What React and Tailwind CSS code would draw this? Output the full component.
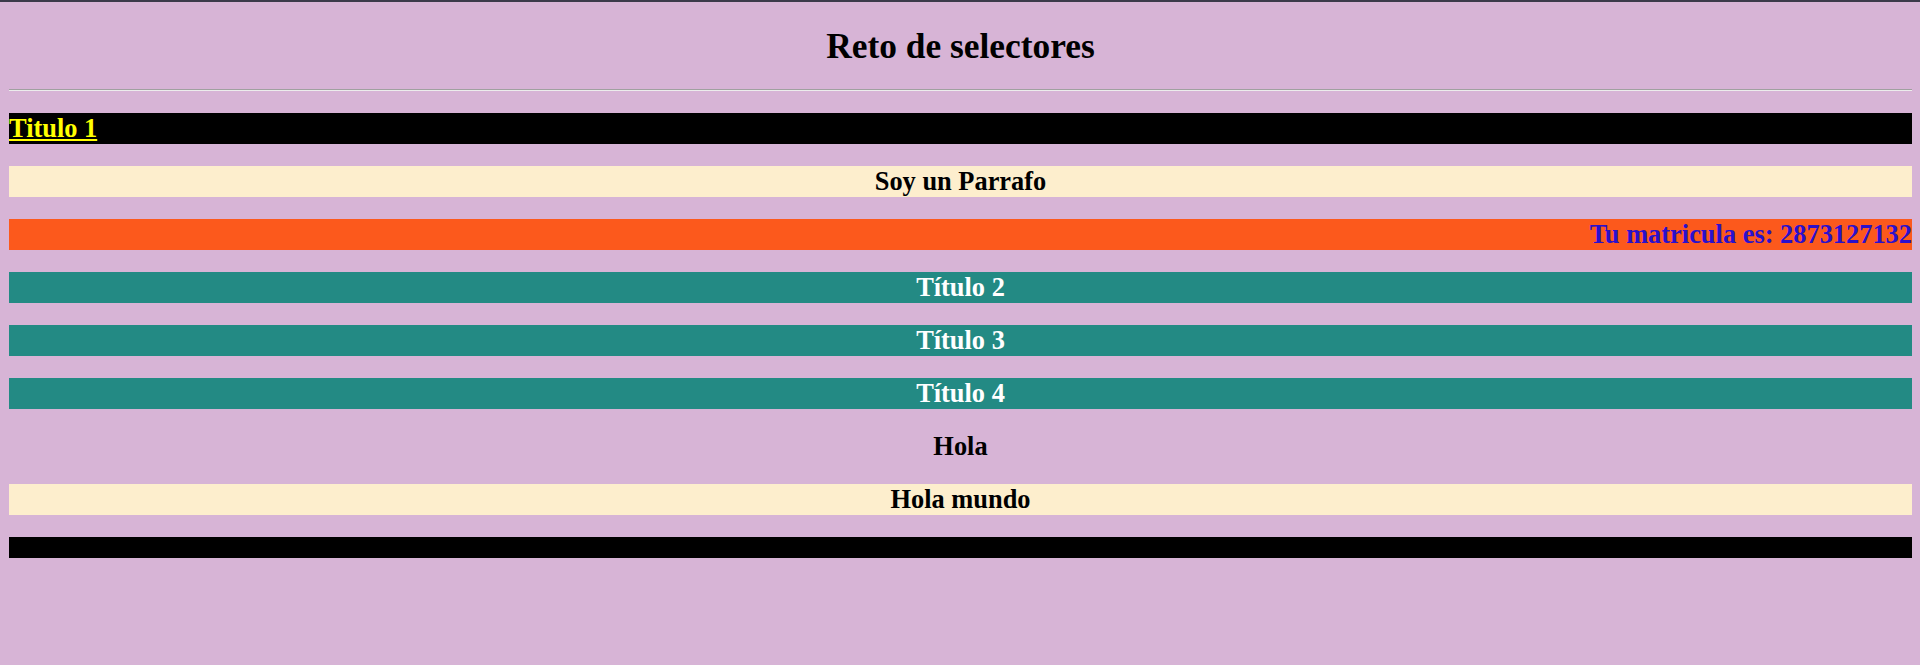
const serif = { fontFamily: '"Liberation Serif", "Times New Roman", serif' };

function Bar({ className = '', children }) {
  return (
    <div className={`h-[31px] text-[26.4px] leading-[31px] font-bold ${className}`}>
      {children}
    </div>
  );
}

export default function App() {
  return (
    <div style={serif} className="min-h-[665px] bg-[#d7b4d6] text-black">
      <div className="h-[2px] bg-[#3b3a4a]" />
      <div className="pl-[9px] pr-[8px]">
        <h1 className="pt-[24px] text-center text-[35.4px] leading-[40px] font-bold">Reto de selectores</h1>
        <hr className="mt-[23px] border-0 border-t border-t-[#a0a0a0] border-b border-b-[#ececec]" />
        <div className="mt-[22px] flex flex-col gap-[22px]">
          <Bar className="bg-black">
            <a href="#" className="text-[#ffff00] underline">Titulo 1</a>
          </Bar>
          <Bar className="bg-[#fdeecd] text-center">Soy un Parrafo</Bar>
          <Bar className="bg-[#fc591c] text-right text-[#2a10cc]">Tu matricula es: 2873127132</Bar>
          <Bar className="bg-[#238a84] text-center text-white">Título 2</Bar>
          <Bar className="bg-[#238a84] text-center text-white">Título 3</Bar>
          <Bar className="bg-[#238a84] text-center text-white">Título 4</Bar>
          <Bar className="text-center">Hola</Bar>
          <Bar className="bg-[#fdeecd] text-center">Hola mundo</Bar>
          <div className="h-[21px] bg-black" />
        </div>
      </div>
    </div>
  );
}
